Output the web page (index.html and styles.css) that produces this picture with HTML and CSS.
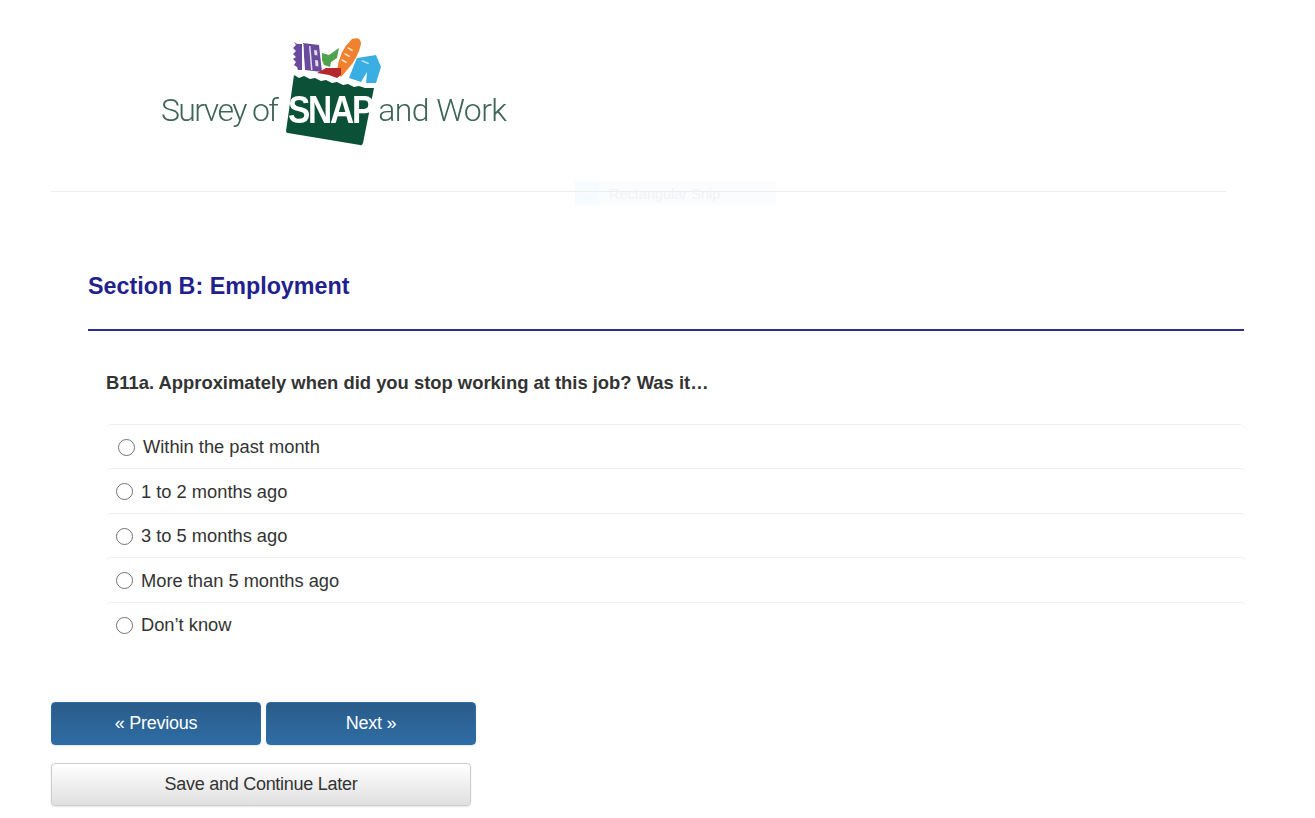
FILE: index.html
```html
<!DOCTYPE html>
<html lang="en">
<head>
  <meta charset="UTF-8" />
  <title>Survey of SNAP and Work</title>
  <link rel="stylesheet" href="styles.css">
</head>
<body>
  <header class="header">
    <div class="logo">
      <span class="logo-text">Survey of</span>
      <div class="bag">
        <svg width="100" height="110" viewBox="285 38 100 110">
          <!-- book -->
          <path fill="#6a4a9c" d="M298 44h5l0 26h-4l-1-3-3-2 2-3-3-3 3-2-3-3 3-3-3-3 3-3-2-3z"/>
          <path fill="#6a4a9c" d="M304 43l16 2 3 27-17-2z"/>
          <path fill="#fff" opacity=".8" d="M303 44l1.500 0 1 26-1.500 0zM310 46l1.500 0 2 24-1.500 0zM315 50l3 .5 .5 5-3-.5zM316 60l3 .5 .5 6-3-.5z"/>
          <!-- leaf -->
          <path fill="#4fa34f" d="M323 53l7 2 10-7-2 10-6 4-1 5-6-2-2-5z"/>
          <!-- baguette -->
          <path fill="#f0822f" d="M353 39q9-3 9 5q-3 14-13 25l-7 8-4-6q2-20 15-32z"/>
          <path fill="#fff" opacity=".85" d="M349 47l5 3-.7 1.200-5-3zM346 53l5 3-.7 1.200-5-3zM343 59l5 3-.7 1.200-5-3z"/>
          <!-- meat -->
          <path fill="#b5282e" d="M318 73l9-5h15v7l-4 3-8-3z"/>
          <!-- shirt -->
          <path fill="#3aaee2" d="M358 58l19-3 5 12-5 16h-10l1-11-6 10-12-4 5-13z"/>
          <path fill="#fff" opacity=".7" d="M363 60l7 3-.6 1.200-7-3z"/>
          <!-- bag -->
          <path fill="#0b5138" d="M295 75l5 3 5-2 6 3 5-1 6 3 5-1 6 3 5-1 6 3 5-1 6 3 5-1 6 2h9l-11 55q-1 3-3 2l-72-12q-2 0-2-2z"/>
        </svg>
        <span class="bag-word">SNAP</span>
      </div>
      <span class="logo-text logo-text-end">and Work</span>
    </div>
  </header>

  <div class="snip">
    <span class="snip-icon"></span>
    <span class="snip-label">Rectangular Snip</span>
  </div>

  <main class="section">
    <h1 class="section-title">Section B: Employment</h1>
    <form class="question">
      <p class="question-text">B11a. Approximately when did you stop working at this job? Was it…</p>
      <label class="answer answer-first"><input type="radio" name="b11a"> Within the past month</label>
      <label class="answer"><input type="radio" name="b11a"> 1 to 2 months ago</label>
      <label class="answer"><input type="radio" name="b11a"> 3 to 5 months ago</label>
      <label class="answer"><input type="radio" name="b11a"> More than 5 months ago</label>
      <label class="answer"><input type="radio" name="b11a"> Don’t know</label>
    </form>
  </main>

  <div class="nav-buttons">
    <button type="button" class="btn btn-blue">« Previous</button>
    <button type="button" class="btn btn-blue">Next »</button>
  </div>
  <button type="button" class="btn btn-grey">Save and Continue Later</button>
</body>
</html>
```

FILE: styles.css
```css
body {
  margin: 0;
  padding: 0 0 12px 51px;
  position: relative;
  font-family: "Liberation Sans", Arial, sans-serif;
  color: #333;
  background: #fff;
}
.header {
  width: 1175px;
  height: 191px;
  border-bottom: 1px solid #eee;
}
.logo {
  display: flex;
  align-items: flex-start;
  padding: 38px 0 0 110px;
  filter: blur(0.4px);
}
.logo-text {
  margin-top: 52px;
  font-family: Roboto, "Liberation Sans", sans-serif;
  font-size: 32px;
  font-weight: 300;
  line-height: 40px;
  letter-spacing: -1.6px;
  color: #3f6557;
  white-space: nowrap;
}
.logo-text-end {
  margin-left: -6px;
  letter-spacing: -0.6px;
}
.bag {
  position: relative;
  width: 100px;
  height: 110px;
  margin-left: 7px;
}
.bag svg {
  display: block;
}
.bag-word {
  position: absolute;
  left: 4px;
  top: 51px;
  font-size: 38px;
  line-height: 42px;
  font-weight: bold;
  letter-spacing: -2.5px;
  color: #fff;
  transform: scaleX(0.88);
  transform-origin: left;
}
.snip {
  position: absolute;
  left: 575px;
  top: 181px;
  width: 201px;
  height: 24px;
  display: flex;
  gap: 2px;
  background: #fbfcfe;
  z-index: -1;
}
.snip-icon {
  width: 24px;
  background: #f5fbff;
}
.snip-label {
  margin-left: 8px;
  font-size: 14.500px;
  line-height: 26px;
  color: #f1f3f5;
}
.section {
  margin-left: 37px;
  width: 1156px;
}
.section-title {
  margin: 0;
  padding-top: 79px;
  height: 58px;
  border-bottom: 2px solid #2e2e8f;
  font-size: 23.300px;
  line-height: 30px;
  font-weight: bold;
  color: #231f8c;
}
.question {
  margin: 0;
}
.question-text {
  margin: 0;
  padding: 41px 0 29.750px 18px;
  font-size: 18.400px;
  line-height: 22px;
  font-weight: bold;
}
.answer {
  display: flex;
  align-items: center;
  gap: 8px;
  height: 42.500px;
  margin: 0 -2px 0 18px;
  padding: 1px 0 0 10px;
  border-top: 1px solid #eee;
  border-radius: 5px 5px 0 0;
  font-size: 18.300px;
}
.answer input {
  appearance: none;
  width: 17px;
  height: 17px;
  margin: 0;
  flex: none;
  border: 1.500px solid #737373;
  border-radius: 50%;
  background: #fff;
}
.answer-first {
  padding-left: 12px;
  margin-right: 0;
}
.nav-buttons {
  display: flex;
  gap: 5px;
  margin-top: 55.250px;
  margin-bottom: 18px;
}
.btn {
  display: block;
  height: 43px;
  padding: 0;
  border-radius: 4px;
  font-family: "Liberation Sans", Arial, sans-serif;
  font-size: 18px;
  letter-spacing: -0.27px;
  cursor: pointer;
}
.btn-blue {
  width: 210px;
  border: 1px solid #2e6da4;
  background: linear-gradient(#2a5b8a, #2e6da4);
  color: #fff;
  box-shadow: 0 1px 2px rgba(0, 0, 0, 0.1);
}
.btn-grey {
  width: 420px;
  border: 1px solid #ccc;
  background: linear-gradient(#fff, #e0e0e0);
  color: #333;
  box-shadow: 0 1px 2px rgba(0, 0, 0, 0.1);
}
```
